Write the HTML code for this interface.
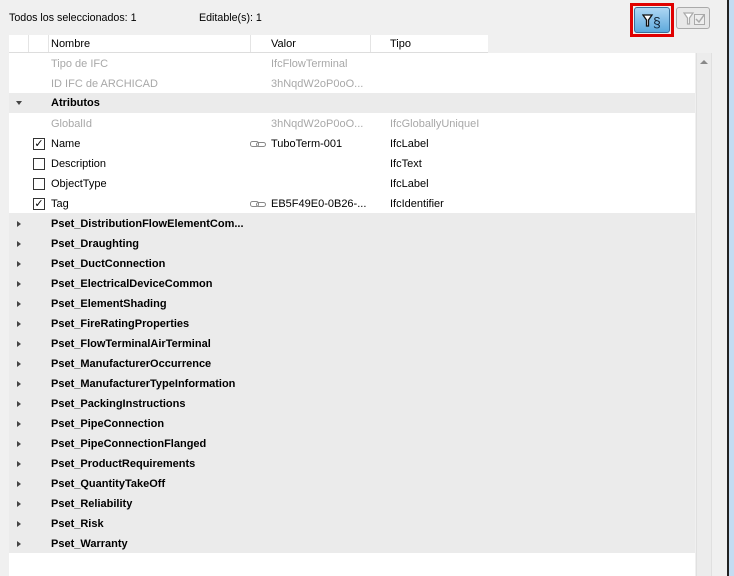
<!DOCTYPE html>
<html><head><meta charset="utf-8"><style>
*{margin:0;padding:0;box-sizing:border-box}
body{width:734px;height:576px;background:#f0f0f0;position:relative;overflow:hidden;font-family:"Liberation Sans",sans-serif;font-size:11px;color:#000}
.a{position:absolute}
.row{position:absolute;left:9px;width:686px;height:20px;line-height:20px}
.row span{position:absolute;white-space:nowrap}
.g{color:#a8a8a8}
.b{font-weight:bold}
.gray{background:#ebebeb}
.tri{position:absolute;left:8px;top:7px;width:0;height:0;border-top:3px solid transparent;border-bottom:3px solid transparent;border-left:4px solid #444}
.cb{position:absolute;left:24px;top:4px;width:12px;height:12px;border:1px solid #333;background:#fff;font-size:11px;line-height:10px;text-align:center}
.lnk{position:absolute;left:241px;top:7px;width:16px;height:6px}
.cx{transform:scaleX(0.97);transform-origin:left center;white-space:nowrap}
</style></head><body>
<div class="a cx" style="left:9px;top:12px">Todos los seleccionados: 1</div>
<div class="a cx" style="left:199px;top:12px">Editable(s): 1</div>
<div class="a" style="left:630px;top:3px;width:44px;height:34px;border:3px solid #e00000"></div>
<div class="a" style="left:634px;top:7px;width:36px;height:26px;border:1px solid #3a6e9a;border-radius:3px;background:linear-gradient(#aed6f4,#5ea9dc)">
<svg class="a" style="left:7px;top:5px" width="22" height="16" viewBox="0 0 22 16"><path d="M1 2h9l-3.5 5v6h-2v-6z" fill="#fff" stroke="#111" stroke-width="1.3"/><text x="11" y="14" font-size="14" font-family="Liberation Sans" fill="#123">§</text></svg></div>
<div class="a" style="left:676px;top:7px;width:34px;height:22px;border:1px solid #aaa;border-radius:3px;background:#e8e8e8">
<svg class="a" style="left:6px;top:3px" width="24" height="16" viewBox="0 0 24 16"><path d="M1 2h9l-3.5 5v6h-2v-6z" fill="#fff" stroke="#aaa" stroke-width="1.2"/><rect x="11.5" y="3.5" width="10" height="10" fill="#eee" stroke="#aaa"/><path d="M13 8l3 3 5-7" fill="none" stroke="#aaa" stroke-width="1.5"/></svg></div>
<div class="a" style="left:9px;top:35px;width:479px;height:18px;background:#fff;border-bottom:1px solid #ddd"></div>
<div class="a" style="left:28px;top:35px;width:1px;height:17px;background:#e4e4e4"></div>
<div class="a" style="left:48px;top:35px;width:1px;height:17px;background:#e4e4e4"></div>
<div class="a" style="left:250px;top:35px;width:1px;height:17px;background:#e4e4e4"></div>
<div class="a" style="left:370px;top:35px;width:1px;height:17px;background:#e4e4e4"></div>
<div class="a" style="left:51px;top:38px">Nombre</div>
<div class="a" style="left:271px;top:38px">Valor</div>
<div class="a" style="left:390px;top:38px">Tipo</div>
<div class="a" style="left:9px;top:53px;width:686px;height:523px;background:#fff"></div>
<div class="a" style="left:696px;top:53px;width:16px;height:523px;background:#ececec;border-left:1px solid #e0e0e0;border-right:1px solid #e0e0e0"></div>
<div class="a" style="left:700px;top:60px;border-left:4px solid transparent;border-right:4px solid transparent;border-bottom:4px solid #888"></div>
<div class="a" style="left:727px;top:0;width:2px;height:576px;background:#222"></div>
<div class="a" style="left:729px;top:0;width:5px;height:576px;background:#c4dcf2"></div>

<div class="row" style="top:54px"><span class="g" style="left:42px">Tipo de IFC</span><span class="g" style="left:262px">IfcFlowTerminal</span></div>
<div class="row" style="top:74px"><span class="g" style="left:42px">ID IFC de ARCHICAD</span><span class="g" style="left:262px">3hNqdW2oP0oO...</span></div>
<div class="row gray" style="top:93px;line-height:21px"><div class="a" style="left:7px;top:8px;border-left:3px solid transparent;border-right:3px solid transparent;border-top:4px solid #444"></div><span class="b" style="left:42px">Atributos</span></div>
<div class="row" style="top:114px"><span class="g" style="left:42px">GlobalId</span><span class="g" style="left:262px">3hNqdW2oP0oO...</span><span class="g" style="left:381px">IfcGloballyUniqueI</span></div>
<div class="row" style="top:134px"><div class="cb">✓</div><span style="left:42px">Name</span><svg class="lnk" viewBox="0 0 16 6"><rect x=".5" y=".5" width="8" height="5" rx="2" fill="none" stroke="#888"/><rect x="6.5" y="1.5" width="9" height="4" rx="2" fill="none" stroke="#888"/></svg><span style="left:262px">TuboTerm-001</span><span style="left:381px">IfcLabel</span></div>
<div class="row" style="top:154px"><div class="cb"></div><span style="left:42px">Description</span><span style="left:381px">IfcText</span></div>
<div class="row" style="top:174px"><div class="cb"></div><span style="left:42px">ObjectType</span><span style="left:381px">IfcLabel</span></div>
<div class="row" style="top:194px"><div class="cb">✓</div><span style="left:42px">Tag</span><svg class="lnk" viewBox="0 0 16 6"><rect x=".5" y=".5" width="8" height="5" rx="2" fill="none" stroke="#888"/><rect x="6.5" y="1.5" width="9" height="4" rx="2" fill="none" stroke="#888"/></svg><span style="left:262px">EB5F49E0-0B26-...</span><span style="left:381px">IfcIdentifier</span></div>
<div class="a gray" style="left:9px;top:213px;width:686px;height:340px"></div>
<div id="ps"></div>
<script>
var n=["Pset_DistributionFlowElementCom...","Pset_Draughting","Pset_DuctConnection","Pset_ElectricalDeviceCommon","Pset_ElementShading","Pset_FireRatingProperties","Pset_FlowTerminalAirTerminal","Pset_ManufacturerOccurrence","Pset_ManufacturerTypeInformation","Pset_PackingInstructions","Pset_PipeConnection","Pset_PipeConnectionFlanged","Pset_ProductRequirements","Pset_QuantityTakeOff","Pset_Reliability","Pset_Risk","Pset_Warranty"];
var h="";n.forEach(function(s,i){h+='<div class="row" style="top:'+(214+i*20)+'px"><div class="tri"></div><span class="b" style="left:42px">'+s+'</span></div>';});
document.getElementById("ps").outerHTML=h;
</script>
</body></html>
